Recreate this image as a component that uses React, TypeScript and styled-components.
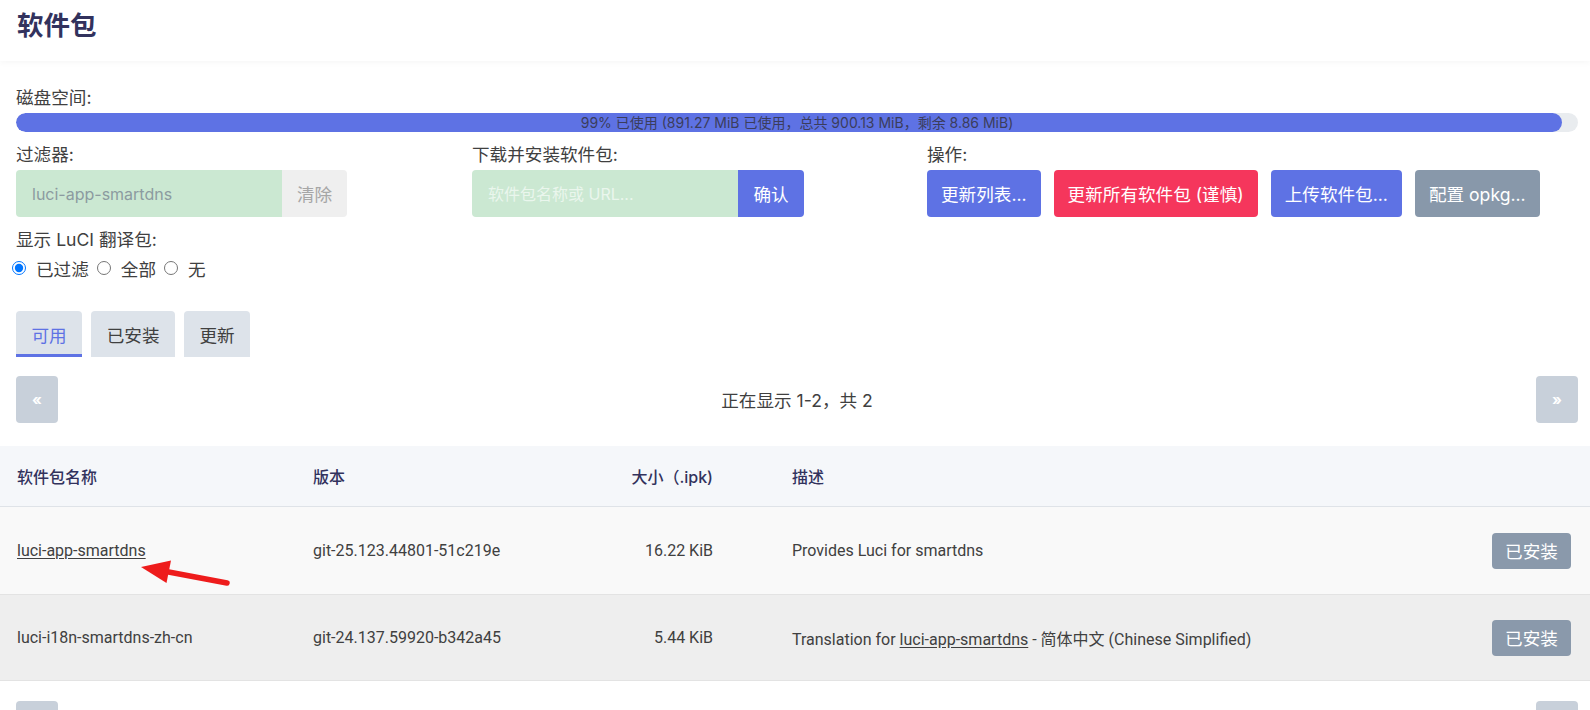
import React from "react";
import styled, { createGlobalStyle, css } from "styled-components";

const GlobalStyle = createGlobalStyle`
  html, body { margin: 0; padding: 0; background: #fff; }
  body {
    font-family: "Inter", "Noto Sans CJK SC", sans-serif;
    color: #404040;
    overflow: hidden;
  }
  * { box-sizing: border-box; }
`;

const BLUE = "#5e72e4";
const RED = "#f5365c";
const SLATE = "#8898aa";

const Page = styled.div`
  width: 1590px;
  height: 710px;
  overflow: hidden;
  background: #fff;
`;

const Header = styled.header`
  height: 61px;
  padding: 10px 17px 0;
  box-shadow: 0 2px 6px rgba(0, 0, 0, 0.035);
  position: relative;
  z-index: 1;
`;

const Title = styled.h2`
  margin: 0;
  font-size: 26.5px;
  line-height: 31px;
  font-weight: 700;
  color: #32325d;
`;

const Section = styled.section<{ $top: number }>`
  padding: ${(p) => p.$top}px 12px 0 16px;
`;

const FieldLabel = styled.div<{ $gap?: number }>`
  margin-top: ${(p) => p.$gap ?? 0}px;
  font-size: 17.6px;
  line-height: 24px;
  color: #404040;
`;

const Track = styled.div`
  position: relative;
  margin-top: 3px;
  height: 19px;
  border-radius: 10px;
  background: #e9ecef;
  display: flex;
  align-items: center;
  justify-content: center;
  overflow: hidden;
`;

const Fill = styled.div`
  position: absolute;
  left: 0;
  top: 0;
  bottom: 0;
  border-radius: 10px;
  background: ${BLUE};
`;

const TrackCaption = styled.span`
  position: relative;
  font-size: 14px;
  line-height: 19px;
  color: #3b3d5c;
  white-space: nowrap;
`;

const Controls = styled.div`
  display: grid;
  grid-template-columns: 456px 455px 1fr;
  margin-top: 11px;
`;

const Group = styled.div`
  display: flex;
  margin-top: 3px;
  height: 47px;
`;

const Field = styled.input`
  width: 266px;
  height: 47px;
  border: none;
  outline: none;
  border-radius: 4px 0 0 4px;
  background: #cbe8d2;
  padding: 0 16px;
  font-family: "Inter", "Noto Sans CJK SC", sans-serif;
  font-size: 16px;
  color: #8c9ba0;
  &::placeholder {
    color: #eaf6ed;
  }
`;

const Button = styled.button<{ $kind: "blue" | "red" | "slate" | "light"; $joined?: boolean }>`
  height: 47px;
  border: none;
  padding: 0 14px;
  border-radius: ${(p) => (p.$joined ? "0 4px 4px 0" : "4px")};
  font-family: "Inter", "Noto Sans CJK SC", sans-serif;
  font-size: 17.6px;
  color: #fff;
  white-space: nowrap;
  cursor: pointer;
  ${(p) =>
    p.$kind === "blue" &&
    css`
      background: ${BLUE};
    `}
  ${(p) =>
    p.$kind === "red" &&
    css`
      background: ${RED};
    `}
  ${(p) =>
    p.$kind === "slate" &&
    css`
      background: ${SLATE};
    `}
  ${(p) =>
    p.$kind === "light" &&
    css`
      background: #efefef;
      color: #a6a6a6;
    `}
`;

const Actions = styled.div`
  display: flex;
  gap: 13px;
  margin-top: 3px;
`;

const RadioRow = styled.div`
  display: flex;
  align-items: center;
  gap: 8px;
  height: 24px;
  margin-top: 4px;
  margin-left: -4px;
  font-size: 17.6px;
`;

const RadioLabel = styled.label`
  display: inline-flex;
  align-items: center;
  gap: 10px;
  color: #404040;
`;

const Radio = styled.input`
  width: 14px;
  height: 14px;
  margin: 0;
  accent-color: #0075ff;
`;

const Tabs = styled.div`
  display: flex;
  gap: 9px;
  margin-top: 31px;
`;

const Tab = styled.div<{ $active?: boolean }>`
  height: 46px;
  padding: 0 15.5px;
  display: flex;
  align-items: center;
  border-radius: 4px 4px 0 0;
  background: #dde3ea;
  font-size: 17.6px;
  color: ${(p) => (p.$active ? BLUE : "#404040")};
  box-shadow: ${(p) => (p.$active ? `inset 0 -3px 0 ${BLUE}` : "none")};
`;

const Pager = styled.div<{ $gap: number }>`
  display: flex;
  align-items: center;
  justify-content: space-between;
  height: 47px;
  margin-top: ${(p) => p.$gap}px;
`;

const PageButton = styled.div`
  width: 42px;
  height: 47px;
  border-radius: 4px;
  background: #c8d0da;
  color: #fff;
  font-size: 15px;
  font-weight: 700;
  display: flex;
  align-items: center;
  justify-content: center;
`;

const PageInfo = styled.div`
  font-size: 17.6px;
  color: #404040;
`;

const Table = styled.div`
  margin-top: 23px;
`;

const COLS = "296px 317px 117px 1fr 120px";

const HeadRow = styled.div`
  display: grid;
  grid-template-columns: ${COLS};
  align-items: center;
  height: 61px;
  background: #f5f7fa;
  border-bottom: 1px solid #dfe3e8;
`;

const Row = styled.div<{ $h: number; $bg: string }>`
  position: relative;
  display: grid;
  grid-template-columns: ${COLS};
  align-items: center;
  height: ${(p) => p.$h}px;
  background: ${(p) => p.$bg};
  border-bottom: 1px solid #e3e3e3;
`;

const Cell = styled.div<{ $right?: boolean; $wide?: boolean; $end?: boolean }>`
  padding-left: ${(p) => (p.$wide ? "62px" : "17px")};
  padding-right: ${(p) => (p.$end ? "19px" : "17px")};
  text-align: ${(p) => (p.$right ? "right" : "left")};
  display: ${(p) => (p.$end ? "flex" : "block")};
  justify-content: flex-end;
  white-space: nowrap;
`;

const HeadCell = styled(Cell)`
  font-size: 16px;
  font-weight: 500;
  color: #32325d;
`;

const BodyCell = styled(Cell)`
  font-family: "Roboto", "Noto Sans CJK SC", sans-serif;
  font-size: 16px;
  color: #404040;
`;

const PkgLink = styled.a`
  color: #404040;
  text-decoration: underline;
  text-underline-offset: 2px;
`;

const InstalledButton = styled.div`
  width: 79px;
  height: 36px;
  border-radius: 4px;
  background: #8a99ab;
  color: #fff;
  font-family: "Inter", "Noto Sans CJK SC", sans-serif;
  font-size: 17.6px;
  display: flex;
  align-items: center;
  justify-content: center;
`;

const Pointer = styled.svg`
  position: absolute;
  left: 130px;
  top: 45px;
  width: 110px;
  height: 45px;
  pointer-events: none;
`;

type Pkg = { name: string; version: string; size: string; desc: React.ReactNode; h: number; bg: string };

const packages: Pkg[] = [
  {
    name: "luci-app-smartdns",
    version: "git-25.123.44801-51c219e",
    size: "16.22 KiB",
    desc: "Provides Luci for smartdns",
    h: 88,
    bg: "#f9f9f9",
  },
  {
    name: "luci-i18n-smartdns-zh-cn",
    version: "git-24.137.59920-b342a45",
    size: "5.44 KiB",
    desc: (
      <>
        Translation for <PkgLink href="#">luci-app-smartdns</PkgLink> - 简体中文 (Chinese Simplified)
      </>
    ),
    h: 86,
    bg: "#eeeeee",
  },
];

const usedPct = 99;

export default function App() {
  return (
    <Page>
      <GlobalStyle />
      <Header>
        <Title>软件包</Title>
      </Header>

      <Section $top={25}>
        <FieldLabel>磁盘空间:</FieldLabel>
        <Track>
          <Fill style={{ width: `${usedPct}%` }} />
          <TrackCaption>99% 已使用 (891.27 MiB 已使用，总共 900.13 MiB，剩余 8.86 MiB)</TrackCaption>
        </Track>

        <Controls>
          <div>
            <FieldLabel>过滤器:</FieldLabel>
            <Group>
              <Field defaultValue="luci-app-smartdns" />
              <Button $kind="light" $joined style={{ width: 65 }}>
                清除
              </Button>
            </Group>
          </div>
          <div>
            <FieldLabel>下载并安装软件包:</FieldLabel>
            <Group>
              <Field placeholder="软件包名称或 URL..." />
              <Button $kind="blue" $joined style={{ width: 66 }}>
                确认
              </Button>
            </Group>
          </div>
          <div>
            <FieldLabel>操作:</FieldLabel>
            <Actions>
              <Button $kind="blue">更新列表...</Button>
              <Button $kind="red">更新所有软件包 (谨慎)</Button>
              <Button $kind="blue">上传软件包...</Button>
              <Button $kind="slate">配置 opkg...</Button>
            </Actions>
          </div>
        </Controls>

        <FieldLabel $gap={11}>显示 LuCI 翻译包:</FieldLabel>
        <RadioRow>
          <RadioLabel>
            <Radio type="radio" name="i18n" defaultChecked />
            已过滤
          </RadioLabel>
          <RadioLabel>
            <Radio type="radio" name="i18n" />
            全部
          </RadioLabel>
          <RadioLabel>
            <Radio type="radio" name="i18n" />
            无
          </RadioLabel>
        </RadioRow>

        <Tabs>
          <Tab $active>可用</Tab>
          <Tab>已安装</Tab>
          <Tab>更新</Tab>
        </Tabs>

        <Pager $gap={19}>
          <PageButton>«</PageButton>
          <PageInfo>正在显示 1-2，共 2</PageInfo>
          <PageButton>»</PageButton>
        </Pager>
      </Section>

      <Table>
        <HeadRow>
          <HeadCell>软件包名称</HeadCell>
          <HeadCell>版本</HeadCell>
          <HeadCell $right>大小（.ipk)</HeadCell>
          <HeadCell $wide>描述</HeadCell>
          <HeadCell $end />
        </HeadRow>
        {packages.map((p, i) => (
          <Row key={p.name} $h={p.h} $bg={p.bg}>
            <BodyCell>{i === 0 ? <PkgLink href="#">{p.name}</PkgLink> : p.name}</BodyCell>
            <BodyCell>{p.version}</BodyCell>
            <BodyCell $right>{p.size}</BodyCell>
            <BodyCell $wide>{p.desc}</BodyCell>
            <BodyCell $end>
              <InstalledButton>已安装</InstalledButton>
            </BodyCell>
            {i === 0 && (
              <Pointer viewBox="0 0 110 45">
                {/* red callout arrow pointing at the package link */}
                <line x1="97" y1="31" x2="36" y2="19.5" stroke="#ee1c1c" strokeWidth="5.5" strokeLinecap="round" />
                <polygon points="11,15 41,8.5 36.5,31" fill="#ee1c1c" />
              </Pointer>
            )}
          </Row>
        ))}
      </Table>

      <Section $top={20}>
        <Pager $gap={0}>
          <PageButton>«</PageButton>
          <PageInfo>正在显示 1-2，共 2</PageInfo>
          <PageButton>»</PageButton>
        </Pager>
      </Section>
    </Page>
  );
}
